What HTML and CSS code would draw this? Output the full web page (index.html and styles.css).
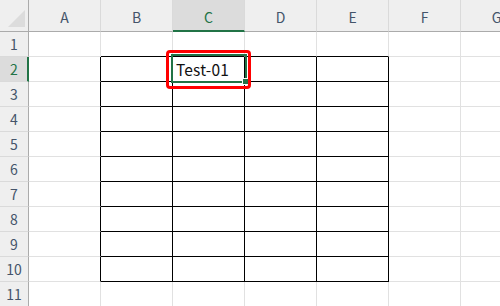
FILE: index.html
```html
<!DOCTYPE html>
<html lang="ja">
<head>
  <meta charset="UTF-8">
  <title>Sheet1</title>
  <link rel="stylesheet" href="styles.css">
</head>
<body>
  <div class="sheet">
    <!-- column headers -->
    <div class="corner">
      <svg width="28" height="31" viewBox="0 0 28 31"><polygon points="8,27 25,10 25,27" fill="#dcdcdc"/></svg>
    </div>
    <div class="ch">A</div>
    <div class="ch">B</div>
    <div class="ch on">C</div>
    <div class="ch">D</div>
    <div class="ch">E</div>
    <div class="ch">F</div>
    <div class="ch">G</div>

    <div class="rh">1</div>
    <div class="c"></div>
    <div class="c bb"></div>
    <div class="c bb"></div>
    <div class="c bb"></div>
    <div class="c bb"></div>
    <div class="c"></div>
    <div class="c"></div>

    <div class="rh on">2</div>
    <div class="c br"></div>
    <div class="c box"></div>
    <div class="c box active">
      <span class="val">Test-01</span>
      <div class="sel"><span class="handle"></span></div>
      <div class="mark"></div>
    </div>
    <div class="c box"></div>
    <div class="c box"></div>
    <div class="c"></div>
    <div class="c"></div>

    <div class="rh">3</div>
    <div class="c br"></div>
    <div class="c box"></div>
    <div class="c box"></div>
    <div class="c box"></div>
    <div class="c box"></div>
    <div class="c"></div>
    <div class="c"></div>

    <div class="rh">4</div>
    <div class="c br"></div>
    <div class="c box"></div>
    <div class="c box"></div>
    <div class="c box"></div>
    <div class="c box"></div>
    <div class="c"></div>
    <div class="c"></div>

    <div class="rh">5</div>
    <div class="c br"></div>
    <div class="c box"></div>
    <div class="c box"></div>
    <div class="c box"></div>
    <div class="c box"></div>
    <div class="c"></div>
    <div class="c"></div>

    <div class="rh">6</div>
    <div class="c br"></div>
    <div class="c box"></div>
    <div class="c box"></div>
    <div class="c box"></div>
    <div class="c box"></div>
    <div class="c"></div>
    <div class="c"></div>

    <div class="rh">7</div>
    <div class="c br"></div>
    <div class="c box"></div>
    <div class="c box"></div>
    <div class="c box"></div>
    <div class="c box"></div>
    <div class="c"></div>
    <div class="c"></div>

    <div class="rh">8</div>
    <div class="c br"></div>
    <div class="c box"></div>
    <div class="c box"></div>
    <div class="c box"></div>
    <div class="c box"></div>
    <div class="c"></div>
    <div class="c"></div>

    <div class="rh">9</div>
    <div class="c br"></div>
    <div class="c box"></div>
    <div class="c box"></div>
    <div class="c box"></div>
    <div class="c box"></div>
    <div class="c"></div>
    <div class="c"></div>

    <div class="rh">10</div>
    <div class="c br"></div>
    <div class="c box"></div>
    <div class="c box"></div>
    <div class="c box"></div>
    <div class="c box"></div>
    <div class="c"></div>
    <div class="c"></div>

    <div class="rh">11</div>
    <div class="c"></div>
    <div class="c"></div>
    <div class="c"></div>
    <div class="c"></div>
    <div class="c"></div>
    <div class="c"></div>
    <div class="c"></div>
  </div>
</body>
</html>
```
FILE: styles.css
```css
body {
  margin: 0;
  overflow: hidden;
  background: #ffffff;
  font-family: "Noto Sans CJK JP", "Noto Sans", sans-serif;
}

.sheet {
  display: grid;
  grid-template-columns: 29px repeat(7, 72px);
  grid-template-rows: 32px repeat(11, 25px);
  width: 500px;
  height: 306px;
  overflow: hidden;
}

.sheet > div {
  box-sizing: border-box;
}

.corner {
  background: #efefef;
  border-right: 1px solid #ababab;
  border-bottom: 1px solid #ababab;
  line-height: 0;
}

.ch {
  background: #efefef;
  border-right: 1px solid #dadada;
  border-bottom: 1px solid #ababab;
  color: #44546a;
  font-size: 14px;
  display: flex;
  align-items: flex-end;
  justify-content: center;
  padding-bottom: 4px;
}

.ch.on {
  background: #dcdcdc;
  border-bottom: 2px solid #217346;
  color: #217346;
  padding-bottom: 3px;
}

.rh {
  background: #efefef;
  border-right: 1px solid #ababab;
  border-bottom: 1px solid #dadada;
  color: #44546a;
  font-size: 14px;
  display: flex;
  align-items: center;
  justify-content: center;
}

.rh.on {
  background: #dcdcdc;
  border-right: 2px solid #217346;
  color: #217346;
  padding-left: 1px;
}

.c {
  border-right: 1px solid #e1e1e1;
  border-bottom: 1px solid #e1e1e1;
}

.c.bb {
  border-bottom-color: #000000;
}

.c.br {
  border-right-color: #000000;
}

.c.box {
  border-right-color: #000000;
  border-bottom-color: #000000;
}

.active {
  position: relative;
  display: flex;
  align-items: center;
  padding-left: 3px;
}

.val {
  font-size: 15.5px;
  letter-spacing: 0.2px;
  color: #111111;
}

.sel {
  position: absolute;
  left: -2px;
  top: -3px;
  width: 76px;
  height: 29px;
  box-sizing: border-box;
  border: 2px solid #217346;
}

.handle {
  position: absolute;
  right: -4px;
  bottom: -4px;
  width: 5px;
  height: 5px;
  background: #217346;
  border: 1px solid #ffffff;
}

.mark {
  position: absolute;
  left: -7px;
  top: -7px;
  width: 85px;
  height: 39px;
  box-sizing: border-box;
  border: 3px solid #ff0000;
  border-radius: 4px;
}
```
